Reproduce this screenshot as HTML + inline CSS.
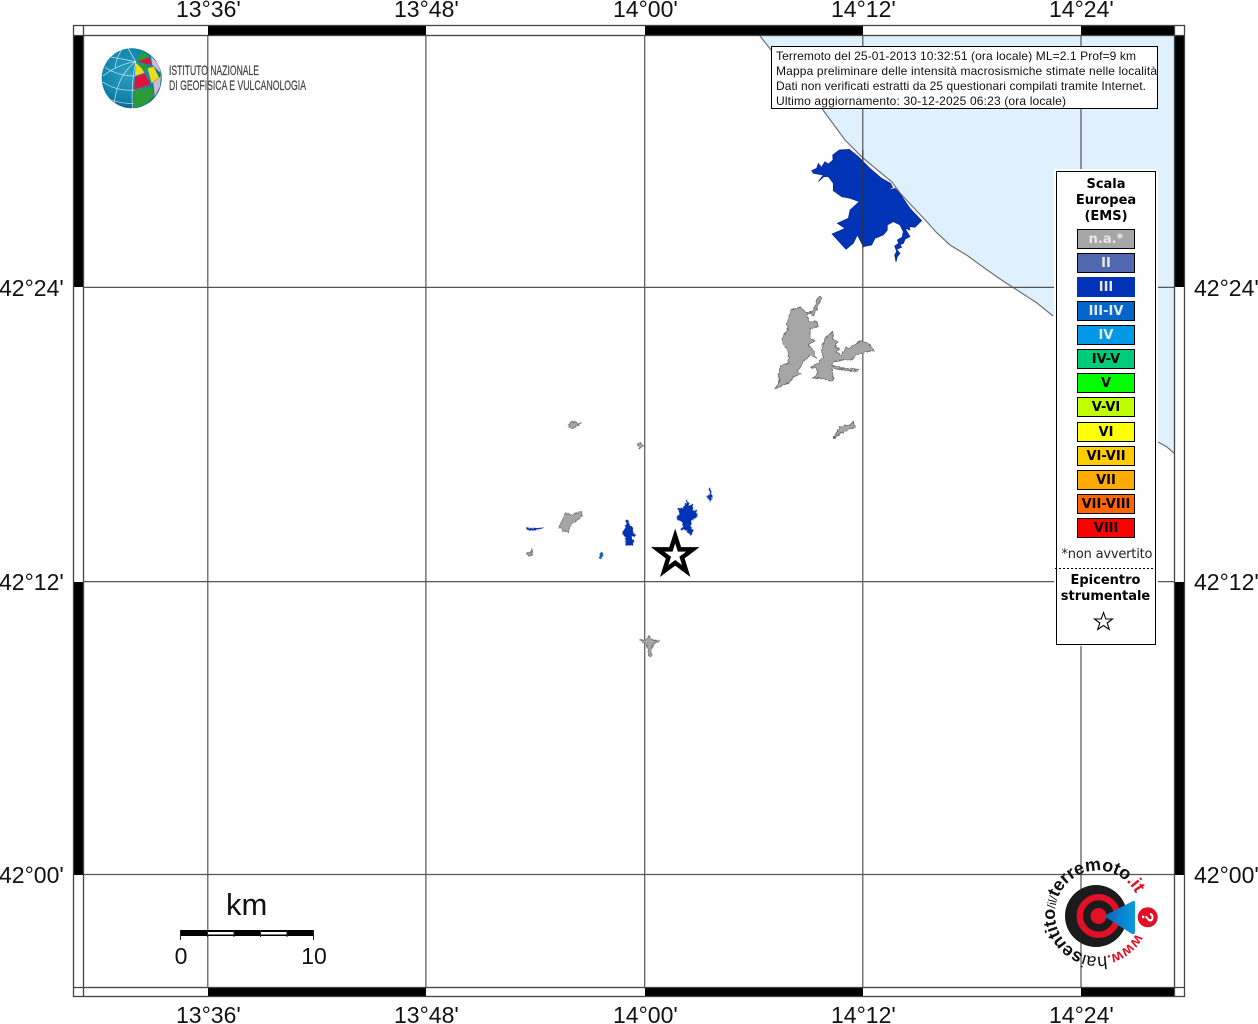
<!DOCTYPE html>
<html><head><meta charset="utf-8"><title>Mappa</title>
<style>
html,body{margin:0;padding:0;background:#fff;width:1258px;height:1024px;overflow:hidden}
svg{display:block}
.t{font-family:"Liberation Sans",sans-serif;font-size:23px;fill:#111}
.d{font-family:"DejaVu Sans",sans-serif;font-weight:bold;font-size:13px;text-anchor:middle}
.i{font-family:"Liberation Sans",sans-serif;font-size:12px;fill:#111}
</style></head><body>
<svg width="1258" height="1024" viewBox="0 0 1258 1024" xmlns="http://www.w3.org/2000/svg">
<defs>
<radialGradient id="gb" cx="0.42" cy="0.42" r="0.65"><stop offset="0" stop-color="#2a9fc0"/><stop offset="0.65" stop-color="#1184aa"/><stop offset="1" stop-color="#0b5a80"/></radialGradient>
<linearGradient id="cone" x1="0" y1="0" x2="1" y2="0"><stop offset="0" stop-color="#0a62b8"/><stop offset="1" stop-color="#0a9ae0"/></linearGradient>
<path id="circ" d="M1136,933.5 A43,43 0 1 1 1140,905"/>
<filter id="rough" x="-5%" y="-5%" width="110%" height="110%" color-interpolation-filters="sRGB"><feTurbulence type="fractalNoise" baseFrequency="0.35" numOctaves="2" seed="4" result="n"/><feDisplacementMap in="SourceGraphic" in2="n" scale="3.5" xChannelSelector="R" yChannelSelector="G"/></filter>
</defs>

<!-- sea -->
<polygon fill="#dff1fe" points="760,36 1175,36 1175,453 1167,448 1158,442 1053,316 1037,303 1017,290 1000,279 983,267 968,256 950,245 936,232 928,223 900,193 892,182 863,158 845,140 823,110"/>
<polyline fill="none" stroke="#707070" stroke-width="1.2" points="760,36 775,55 823,110 845,140 863,158 892,182 900,193 928,223 936,232 950,245 968,256 983,267 1000,279 1017,290 1037,303 1053,316"/>
<polyline fill="none" stroke="#707070" stroke-width="1.2" points="1158,442 1167,447 1175,454"/>

<!-- grid -->
<g stroke="#555" stroke-width="1.2" fill="none">
<path d="M207.8,36V987M425.9,36V987M644.7,36V987M862.8,36V987M1081,36V987"/>
<path d="M84,287.4H1175M84,581.6H1175M84,874.5H1175"/>
</g>

<!-- frame bars -->
<g fill="#000">
<rect x="208" y="26" width="218" height="10"/><rect x="645" y="26" width="218" height="10"/><rect x="1081" y="26" width="94" height="10"/>
<rect x="208" y="988" width="218" height="9"/><rect x="645" y="988" width="218" height="9"/><rect x="1081" y="988" width="94" height="9"/>
<rect x="74" y="36" width="10" height="251"/><rect x="74" y="582" width="10" height="293"/>
<rect x="1175" y="36" width="10" height="251"/><rect x="1175" y="582" width="10" height="293"/>
</g>
<g fill="none" stroke="#444" stroke-width="1.3">
<rect x="73.5" y="25.5" width="1111" height="971"/>
<rect x="83.5" y="35.5" width="1091" height="952"/>
<path d="M83.5,25.5V35.5M73.5,35.5H83.5M1174.5,25.5V35.5M1174.5,35.5H1184.5M83.5,987.5V996.5M73.5,987.5H83.5M1174.5,987.5V996.5M1174.5,987.5H1184.5"/>
</g>

<!-- blue region -->
<g transform="translate(800,140) scale(.33333)">
<path fill="#0033b5" stroke="#0a2a90" stroke-width="2" d="M98,45 L118,30 L148,28 L175,50 L210,85 L245,115 L272,130 L278,142 L258,152 L285,145 L298,158 L330,205 L365,242 L345,262 L328,260 L330,270 L315,265 L330,290 L316,297 L310,310 L300,314 L305,322 L290,328 L300,340 L292,350 L288,366 L284,345 L290,335 L284,318 L296,310 L292,300 L306,292 L310,275 L300,255 L280,245 L262,255 L262,270 L250,285 L225,295 L215,315 L190,320 L172,285 L160,310 L138,328 L96,282 L135,265 L112,250 L145,235 L150,210 L178,185 L150,175 L125,170 L100,152 L100,130 L85,110 L72,110 L55,125 L70,105 L40,100 L35,92 L50,85 L55,70 L64,82 L75,65 L85,72 L105,55 L112,70 L100,78 Z"/>
</g>
<path d="M862.8,150V248" stroke="#333" stroke-width="1"/>

<!-- gray large -->
<g filter="url(#rough)">
<g transform="translate(760,280) scale(.33333)" fill="#a6a6a6" stroke="#666" stroke-width="2.5" stroke-linejoin="round">
<path d="M180,48 L185,55 L175,75 L165,100 L160,108 L150,98 L135,95 L120,82 L108,85 L92,88 L88,110 L80,130 L85,150 L72,165 L66,180 L72,195 L85,215 L85,250 L62,255 L55,290 L60,300 L45,328 L70,315 L85,310 L100,290 L125,282 L112,275 L122,260 L130,245 L150,225 L170,235 L160,210 L145,195 L165,182 L150,175 L150,145 L175,140 L170,125 L148,125 L140,105 L160,90 L170,60 Z"/>
<path d="M218,155 L220,180 L235,185 L225,200 L240,208 L225,215 L245,225 L255,205 L270,205 L280,195 L305,182 L330,195 L342,212 L320,215 L290,225 L275,240 L240,240 L220,245 L215,255 L250,265 L298,268 L280,275 L240,268 L215,265 L220,300 L210,305 L190,295 L160,295 L175,275 L170,265 L150,262 L175,250 L180,240 L190,230 L183,210 L195,175 Z"/>
<path d="M280,425 L285,442 L260,450 L235,465 L218,475 L235,450 L240,440 L262,435 L268,438 Z"/>
</g>

<!-- small islands -->
<g transform="translate(510,410) scale(.33333)" stroke-linejoin="round">
<g fill="#a6a6a6" stroke="#666" stroke-width="2.5">
<path d="M176,42 L185,33 L192,38 L200,36 L204,42 L216,40 L200,48 L188,55 L176,52 Z"/>
<path d="M382,102 L392,98 L396,106 L406,108 L394,110 L388,116 Z"/>
<path d="M215,305 L215,320 L182,345 L176,368 L165,362 L158,364 L154,354 L146,352 L155,335 L165,310 L185,315 Z"/>
<path d="M50,428 L60,430 L66,418 L68,436 L56,438 Z"/>
<path d="M388,690 L410,690 L415,680 L430,690 L450,692 L432,702 L424,716 L424,740 L416,736 L412,706 Z"/>
</g>
<g fill="#0033b5" stroke="#0a2a90" stroke-width="2">
<path d="M48,353 L70,356 L100,353 L90,359 L60,359 Z"/>
<path d="M350,327 L356,335 L360,348 L368,355 L368,370 L375,375 L366,382 L370,395 L366,406 L348,405 L346,380 L338,372 L346,355 Z"/>
<path d="M600,232 L604,255 L606,265 L600,274 L593,262 L598,252 Z"/>
<path d="M532,272 L538,290 L546,283 L545,302 L560,300 L560,322 L545,330 L540,350 L550,360 L542,378 L530,360 L515,360 L520,340 L500,322 L510,315 L505,296 L520,295 Z"/>
</g>
<path d="M270,432 L280,428 L276,442 L269,446 Z" fill="#0a66c0" stroke="#0a55a0" stroke-width="1"/>
</g>
</g>

<!-- star -->
<polygon fill="#fff" stroke="#000" stroke-width="4.5" stroke-miterlimit="10" points="675.2,536 679.5,549.4 692.8,549.4 682,557.6 686.2,571 675.2,562.8 664.2,571 668.4,557.6 657.6,549.4 670.9,549.4"/>

<!-- INGV logo -->
<g>
<circle cx="131.7" cy="78.3" r="30" fill="url(#gb)"/>
<g transform="translate(95,40) scale(.33333)">
<polygon fill="#2a9a3a" points="124,63 140,33 165,50 140,60"/>
<polygon fill="#e0123a" points="128,65 163,52 170,75 150,70"/>
<polygon fill="#cbbbd2" points="168,48 190,72 198,100 172,75"/>
<polygon fill="#f2dc1a" points="122,68 140,85 148,98 120,108"/>
<polygon fill="#2a9a3a" points="128,68 150,72 165,85 148,95"/>
<polygon fill="#f2dc1a" points="158,85 176,80 192,112 170,130"/>
<polygon fill="#e0123a" points="120,110 150,100 166,134 118,148"/>
<polygon fill="#2a9a3a" points="115,152 172,140 178,170 150,195 115,204"/>
<polygon fill="#cbbbd2" points="175,128 198,108 195,140 179,170"/>
<polygon fill="#2a9a3a" points="195,96 200,100 198,110 194,108"/>
<g fill="none" stroke="#e0eef2" stroke-width="1.9">
<path d="M122,65 Q108,130 112,205"/><path d="M122,65 Q68,105 58,188"/><path d="M122,65 Q70,72 24,108"/><path d="M122,65 L100,26"/>
<path d="M44,50 Q85,58 122,65"/><path d="M80,30 Q60,60 62,85"/><path d="M30,82 Q70,108 118,108"/><path d="M22,125 Q66,155 118,150"/><path d="M50,180 Q85,192 115,190"/>
</g>
</g>
<g font-family="'Liberation Sans',sans-serif" font-size="14" fill="#444" stroke="#444" stroke-width=".25">
<text x="169" y="75" textLength="90" lengthAdjust="spacingAndGlyphs">ISTITUTO NAZIONALE</text>
<text x="169" y="90" textLength="137" lengthAdjust="spacingAndGlyphs">DI GEOFISICA E VULCANOLOGIA</text>
</g>
</g>

<!-- info box -->
<rect x="771.5" y="46.5" width="386" height="62" fill="#fff" stroke="#000" stroke-width="1"/>
<text class="i" x="776" y="60" textLength="360">Terremoto del 25-01-2013 10:32:51 (ora locale) ML=2.1 Prof=9 km</text>
<text class="i" x="776" y="75" textLength="381">Mappa preliminare delle intensità macrosismiche stimate nelle località</text>
<text class="i" x="776" y="90" textLength="370">Dati non verificati estratti da 25 questionari compilati tramite Internet.</text>
<text class="i" x="776" y="105" textLength="290">Ultimo aggiornamento: 30-12-2025 06:23 (ora locale)</text>

<!-- legend -->
<rect x="1054" y="169" width="104" height="477" fill="#fff"/>
<rect x="1056.5" y="171.5" width="99" height="473" fill="#fff" stroke="#000" stroke-width="1"/>
<text class="d" x="1106" y="188" fill="#000">Scala</text>
<text class="d" x="1106" y="204" fill="#000">Europea</text>
<text class="d" x="1106" y="220" fill="#000">(EMS)</text>
<g stroke="#000" stroke-width="1">
<rect x="1077.5" y="229.5" width="57" height="19" fill="#a6a6a6"/>
<rect x="1077.5" y="253.5" width="57" height="19" fill="#5068b0"/>
<rect x="1077.5" y="277.5" width="57" height="19" fill="#0033b5" stroke="#0033b5"/>
<rect x="1077.5" y="301.5" width="57" height="19" fill="#0066cc"/>
<rect x="1077.5" y="325.5" width="57" height="19" fill="#0099e6"/>
<rect x="1077.5" y="349.5" width="57" height="19" fill="#00cc77"/>
<rect x="1077.5" y="373.5" width="57" height="19" fill="#00ff00"/>
<rect x="1077.5" y="397.5" width="57" height="19" fill="#bfff00"/>
<rect x="1077.5" y="422.5" width="57" height="19" fill="#ffff00"/>
<rect x="1077.5" y="446.5" width="57" height="19" fill="#ffcc00"/>
<rect x="1077.5" y="470.5" width="57" height="19" fill="#ffaa00"/>
<rect x="1077.5" y="494.5" width="57" height="19" fill="#ff6600"/>
<rect x="1077.5" y="518.5" width="57" height="19" fill="#ff0000"/>
</g>
<g class="d">
<text class="d" x="1106" y="243" fill="#e8e8e8">n.a.*</text>
<text class="d" x="1106" y="267" fill="#e8e8e8">II</text>
<text class="d" x="1106" y="291" fill="#e8e8e8">III</text>
<text class="d" x="1106" y="315" fill="#e8e8e8">III-IV</text>
<text class="d" x="1106" y="339" fill="#e8e8e8">IV</text>
<text class="d" x="1106" y="363" fill="#000">IV-V</text>
<text class="d" x="1106" y="387" fill="#000">V</text>
<text class="d" x="1106" y="411" fill="#000">V-VI</text>
<text class="d" x="1106" y="436" fill="#000">VI</text>
<text class="d" x="1106" y="460" fill="#000">VI-VII</text>
<text class="d" x="1106" y="484" fill="#000">VII</text>
<text class="d" x="1106" y="508" fill="#000">VII-VIII</text>
<text class="d" x="1106" y="532" fill="#000">VIII</text>
</g>
<text x="1107" y="558" font-family="'DejaVu Sans',sans-serif" font-size="13" text-anchor="middle" fill="#222" textLength="91">*non avvertito</text>
<path d="M1055,568.5H1153" stroke="#000" stroke-width="1" stroke-dasharray="2,2"/>
<text class="d" x="1105.5" y="584" fill="#000">Epicentro</text>
<text class="d" x="1105.5" y="600" fill="#000">strumentale</text>
<polygon fill="#fff" stroke="#000" stroke-width="1.1" points="1103.5,612.5 1105.8,619 1112.5,619 1107.2,623 1109.3,629.5 1103.5,625.6 1097.7,629.5 1099.8,623 1094.5,619 1101.2,619"/>

<!-- scale bar -->
<g>
<rect x="181" y="930" width="132" height="6" fill="#000"/>
<rect x="208" y="932" width="26" height="2.5" fill="#fff"/>
<rect x="261" y="932" width="26" height="2.5" fill="#fff"/>
<path d="M180.5,930V940M207.5,930V937M234,930V937M260.5,930V937M287,930V937M313.5,930V940" stroke="#222" stroke-width="1" fill="none"/>
<text x="226" y="915" font-family="'Liberation Sans',sans-serif" font-size="31" fill="#111">km</text>
<text class="t" x="181" y="964" text-anchor="middle">0</text>
<text class="t" x="314" y="964" text-anchor="middle">10</text>
</g>

<!-- haisentito logo -->
<g>
<circle cx="1096" cy="916" r="31" fill="#1b1b1b"/>
<circle cx="1098.6" cy="916" r="18.8" fill="none" stroke="#e30f25" stroke-width="6.4"/>
<circle cx="1098.6" cy="916" r="8" fill="#e30f25"/>
<path d="M1104,916 L1133,901 Q1135,900 1135,903 L1135,932 Q1135,935 1132,934 Z" fill="url(#cone)"/>
<circle cx="1147.7" cy="917.3" r="10" fill="#e30f25"/>
<text x="1147.7" y="923" font-family="'Liberation Sans',sans-serif" font-size="17" font-weight="bold" fill="#fff" text-anchor="middle" transform="rotate(90 1147.7 917.3)">?</text>
<text font-family="'Liberation Sans',sans-serif" font-size="18" fill="#111" letter-spacing="-.2"><textPath href="#circ"><tspan fill="#e30f25" font-weight="bold" font-size="15">www.</tspan><tspan>hai</tspan><tspan font-weight="bold">sentito</tspan><tspan font-size="12">/il/</tspan><tspan font-weight="bold">terremoto</tspan><tspan fill="#e30f25" font-weight="bold">.it</tspan></textPath></text>
</g>

<!-- tick labels -->
<g class="t">
<text class="t" x="176" y="17">13°36'</text><text class="t" x="394" y="17">13°48'</text><text class="t" x="613" y="17">14°00'</text><text class="t" x="831" y="17">14°12'</text><text class="t" x="1049" y="17">14°24'</text>
<text class="t" x="176" y="1023">13°36'</text><text class="t" x="394" y="1023">13°48'</text><text class="t" x="613" y="1023">14°00'</text><text class="t" x="831" y="1023">14°12'</text><text class="t" x="1049" y="1023">14°24'</text>
<text class="t" x="-1" y="296">42°24'</text><text class="t" x="-1" y="590">42°12'</text><text class="t" x="-1" y="883">42°00'</text>
<text class="t" x="1194" y="296">42°24'</text><text class="t" x="1194" y="590">42°12'</text><text class="t" x="1194" y="883">42°00'</text>
</g>
</svg>
</body></html>
